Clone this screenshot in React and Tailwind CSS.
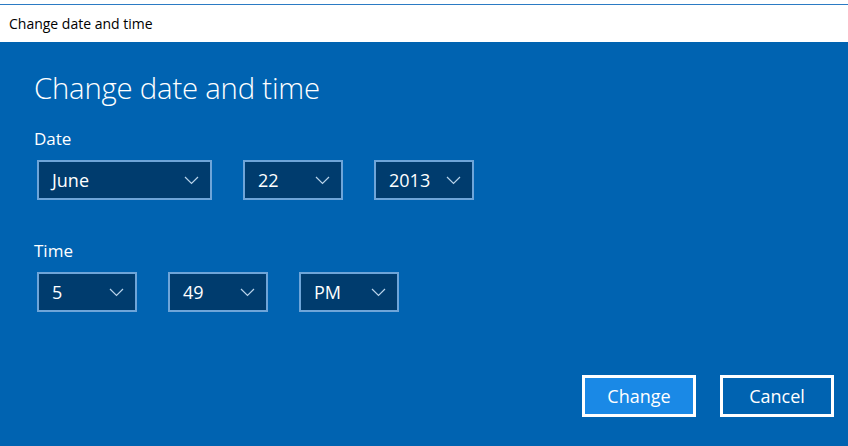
import React from 'react';

const Chevron = () => (
    <svg width="15" height="9" viewBox="0 0 15 9" fill="none" className="shrink-0">
        <path d="M1 1 L7.5 7.5 L14 1" stroke="#b9d3ea" strokeWidth="1.2" />
    </svg>
);

const Select = ({ value, width }) => (
    <div
        className={`${width} h-[40px] flex items-center justify-between pl-[13px] pr-[11px] border-2 border-[#6ea5d9] bg-[#003c6e] text-white text-[18px]`}
    >
        <span className="leading-none">{value}</span>
        <Chevron />
    </div>
);

export default function App() {
    return (
        <div
            className="w-[848px] h-[446px] flex flex-col bg-white overflow-hidden"
            style={{ fontFamily: '"Open Sans", "Noto Sans", sans-serif' }}
        >
            <div className="h-[4px] bg-white" />
            <div className="h-px bg-[#2b7bc4]" />
            <div className="h-[37px] flex items-center pl-[9px] text-[14px] text-black">
                Change date and time
            </div>

            <div className="flex-1 bg-[#0063b1] text-white flex flex-col pl-[34px] pr-[14px]">
                <h1 className="mt-[28px] text-[29.3px] font-light leading-[36px] tracking-[-0.2px]">
                    Change date and time
                </h1>

                <div className="mt-[22px] text-[17px] leading-[22px]">Date</div>
                <div className="mt-[10px] ml-[3px] flex gap-[31px]">
                    <Select value="June" width="w-[175px]" />
                    <Select value="22" width="w-[100px]" />
                    <Select value="2013" width="w-[100px]" />
                </div>

                <div className="mt-[40px] text-[17px] leading-[22px]">Time</div>
                <div className="mt-[10px] ml-[3px] flex gap-[31px]">
                    <Select value="5" width="w-[100px]" />
                    <Select value="49" width="w-[100px]" />
                    <Select value="PM" width="w-[100px]" />
                </div>

                <div className="mt-[63px] flex justify-end gap-[24px]">
                    <button className="w-[114px] h-[42px] border-[3px] border-white bg-[#1a89e6] text-[18px] text-white">
                        Change
                    </button>
                    <button className="w-[114px] h-[42px] border-[3px] border-white bg-[#0063b1] text-[18px] text-white">
                        Cancel
                    </button>
                </div>
            </div>
        </div>
    );
}
